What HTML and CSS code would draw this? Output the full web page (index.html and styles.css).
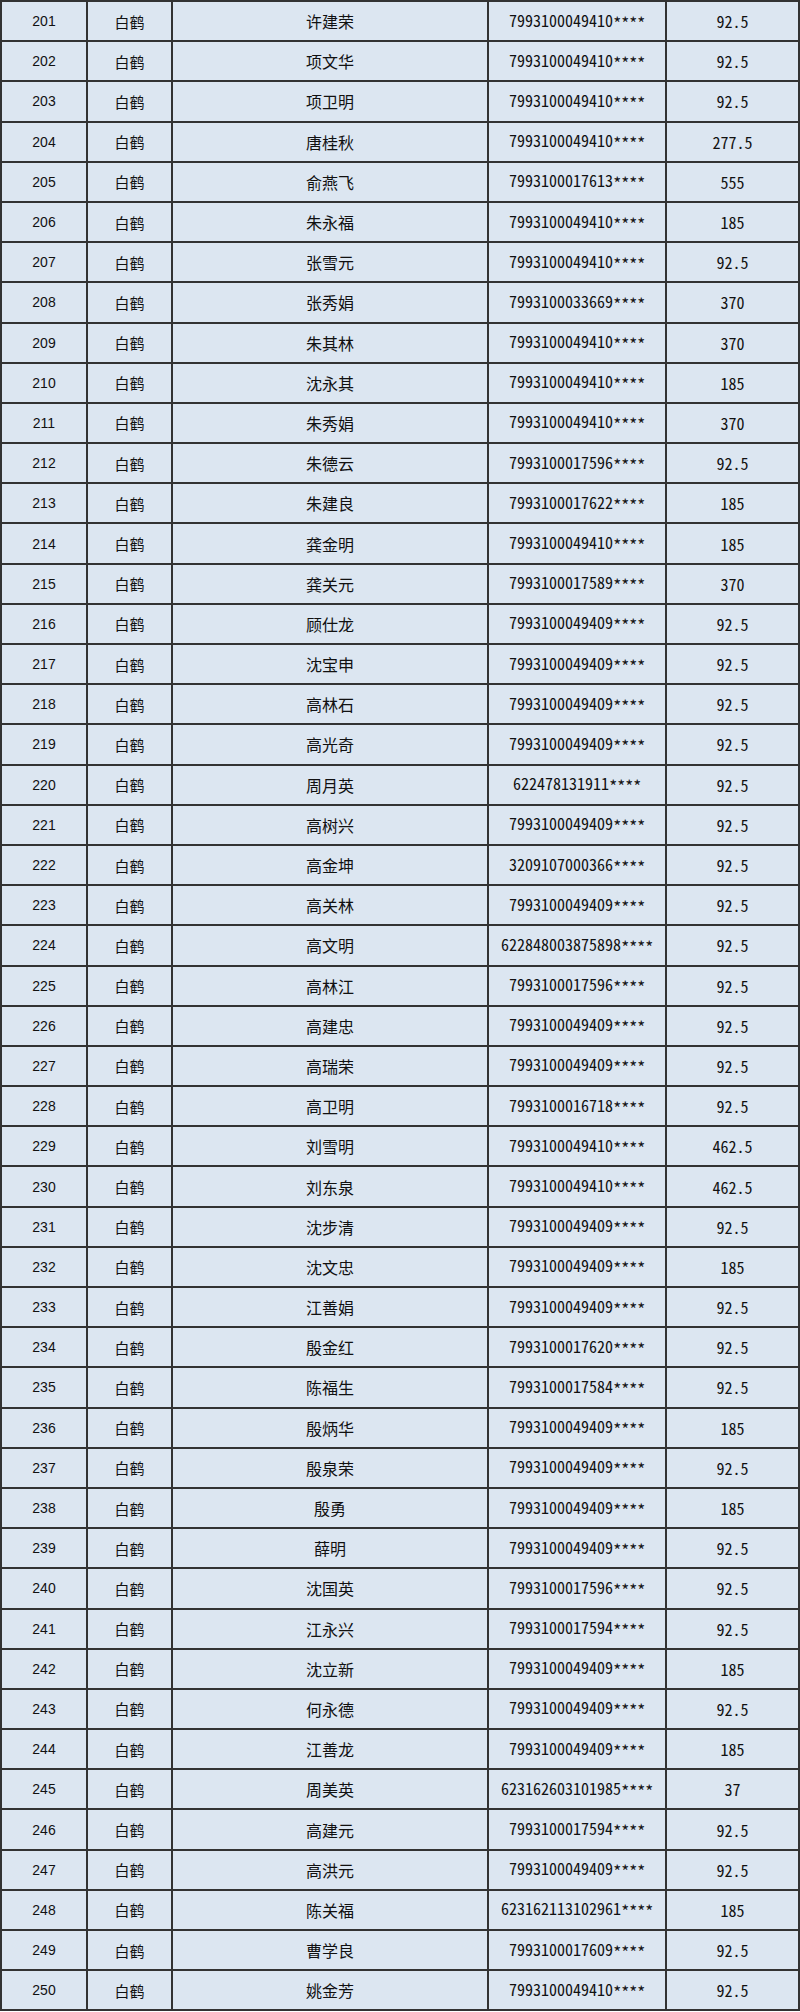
FILE: index.html
```html
<!DOCTYPE html>
<html lang="zh-CN">
<head>
<meta charset="utf-8">
<title>名单</title>
<link rel="stylesheet" href="styles.css">
</head>
<body>
<table class="roster">
<colgroup>
<col class="c-no"><col class="c-town"><col class="c-name"><col class="c-acct"><col class="c-amt">
</colgroup>
<tbody>
<tr><td class="no">201</td><td class="town">白鹤</td><td class="name">许建荣</td><td class="acct">7993100049410<span class="mask">****</span></td><td class="amt">92.5</td></tr>
<tr><td class="no">202</td><td class="town">白鹤</td><td class="name">项文华</td><td class="acct">7993100049410<span class="mask">****</span></td><td class="amt">92.5</td></tr>
<tr><td class="no">203</td><td class="town">白鹤</td><td class="name">项卫明</td><td class="acct">7993100049410<span class="mask">****</span></td><td class="amt">92.5</td></tr>
<tr><td class="no">204</td><td class="town">白鹤</td><td class="name">唐桂秋</td><td class="acct">7993100049410<span class="mask">****</span></td><td class="amt">277.5</td></tr>
<tr><td class="no">205</td><td class="town">白鹤</td><td class="name">俞燕飞</td><td class="acct">7993100017613<span class="mask">****</span></td><td class="amt">555</td></tr>
<tr><td class="no">206</td><td class="town">白鹤</td><td class="name">朱永福</td><td class="acct">7993100049410<span class="mask">****</span></td><td class="amt">185</td></tr>
<tr><td class="no">207</td><td class="town">白鹤</td><td class="name">张雪元</td><td class="acct">7993100049410<span class="mask">****</span></td><td class="amt">92.5</td></tr>
<tr><td class="no">208</td><td class="town">白鹤</td><td class="name">张秀娟</td><td class="acct">7993100033669<span class="mask">****</span></td><td class="amt">370</td></tr>
<tr><td class="no">209</td><td class="town">白鹤</td><td class="name">朱其林</td><td class="acct">7993100049410<span class="mask">****</span></td><td class="amt">370</td></tr>
<tr><td class="no">210</td><td class="town">白鹤</td><td class="name">沈永其</td><td class="acct">7993100049410<span class="mask">****</span></td><td class="amt">185</td></tr>
<tr><td class="no">211</td><td class="town">白鹤</td><td class="name">朱秀娟</td><td class="acct">7993100049410<span class="mask">****</span></td><td class="amt">370</td></tr>
<tr><td class="no">212</td><td class="town">白鹤</td><td class="name">朱德云</td><td class="acct">7993100017596<span class="mask">****</span></td><td class="amt">92.5</td></tr>
<tr><td class="no">213</td><td class="town">白鹤</td><td class="name">朱建良</td><td class="acct">7993100017622<span class="mask">****</span></td><td class="amt">185</td></tr>
<tr><td class="no">214</td><td class="town">白鹤</td><td class="name">龚金明</td><td class="acct">7993100049410<span class="mask">****</span></td><td class="amt">185</td></tr>
<tr><td class="no">215</td><td class="town">白鹤</td><td class="name">龚关元</td><td class="acct">7993100017589<span class="mask">****</span></td><td class="amt">370</td></tr>
<tr><td class="no">216</td><td class="town">白鹤</td><td class="name">顾仕龙</td><td class="acct">7993100049409<span class="mask">****</span></td><td class="amt">92.5</td></tr>
<tr><td class="no">217</td><td class="town">白鹤</td><td class="name">沈宝申</td><td class="acct">7993100049409<span class="mask">****</span></td><td class="amt">92.5</td></tr>
<tr><td class="no">218</td><td class="town">白鹤</td><td class="name">高林石</td><td class="acct">7993100049409<span class="mask">****</span></td><td class="amt">92.5</td></tr>
<tr><td class="no">219</td><td class="town">白鹤</td><td class="name">高光奇</td><td class="acct">7993100049409<span class="mask">****</span></td><td class="amt">92.5</td></tr>
<tr><td class="no">220</td><td class="town">白鹤</td><td class="name">周月英</td><td class="acct">622478131911<span class="mask">****</span></td><td class="amt">92.5</td></tr>
<tr><td class="no">221</td><td class="town">白鹤</td><td class="name">高树兴</td><td class="acct">7993100049409<span class="mask">****</span></td><td class="amt">92.5</td></tr>
<tr><td class="no">222</td><td class="town">白鹤</td><td class="name">高金坤</td><td class="acct">3209107000366<span class="mask">****</span></td><td class="amt">92.5</td></tr>
<tr><td class="no">223</td><td class="town">白鹤</td><td class="name">高关林</td><td class="acct">7993100049409<span class="mask">****</span></td><td class="amt">92.5</td></tr>
<tr><td class="no">224</td><td class="town">白鹤</td><td class="name">高文明</td><td class="acct">622848003875898<span class="mask">****</span></td><td class="amt">92.5</td></tr>
<tr><td class="no">225</td><td class="town">白鹤</td><td class="name">高林江</td><td class="acct">7993100017596<span class="mask">****</span></td><td class="amt">92.5</td></tr>
<tr><td class="no">226</td><td class="town">白鹤</td><td class="name">高建忠</td><td class="acct">7993100049409<span class="mask">****</span></td><td class="amt">92.5</td></tr>
<tr><td class="no">227</td><td class="town">白鹤</td><td class="name">高瑞荣</td><td class="acct">7993100049409<span class="mask">****</span></td><td class="amt">92.5</td></tr>
<tr><td class="no">228</td><td class="town">白鹤</td><td class="name">高卫明</td><td class="acct">7993100016718<span class="mask">****</span></td><td class="amt">92.5</td></tr>
<tr><td class="no">229</td><td class="town">白鹤</td><td class="name">刘雪明</td><td class="acct">7993100049410<span class="mask">****</span></td><td class="amt">462.5</td></tr>
<tr><td class="no">230</td><td class="town">白鹤</td><td class="name">刘东泉</td><td class="acct">7993100049410<span class="mask">****</span></td><td class="amt">462.5</td></tr>
<tr><td class="no">231</td><td class="town">白鹤</td><td class="name">沈步清</td><td class="acct">7993100049409<span class="mask">****</span></td><td class="amt">92.5</td></tr>
<tr><td class="no">232</td><td class="town">白鹤</td><td class="name">沈文忠</td><td class="acct">7993100049409<span class="mask">****</span></td><td class="amt">185</td></tr>
<tr><td class="no">233</td><td class="town">白鹤</td><td class="name">江善娟</td><td class="acct">7993100049409<span class="mask">****</span></td><td class="amt">92.5</td></tr>
<tr><td class="no">234</td><td class="town">白鹤</td><td class="name">殷金红</td><td class="acct">7993100017620<span class="mask">****</span></td><td class="amt">92.5</td></tr>
<tr><td class="no">235</td><td class="town">白鹤</td><td class="name">陈福生</td><td class="acct">7993100017584<span class="mask">****</span></td><td class="amt">92.5</td></tr>
<tr><td class="no">236</td><td class="town">白鹤</td><td class="name">殷炳华</td><td class="acct">7993100049409<span class="mask">****</span></td><td class="amt">185</td></tr>
<tr><td class="no">237</td><td class="town">白鹤</td><td class="name">殷泉荣</td><td class="acct">7993100049409<span class="mask">****</span></td><td class="amt">92.5</td></tr>
<tr><td class="no">238</td><td class="town">白鹤</td><td class="name">殷勇</td><td class="acct">7993100049409<span class="mask">****</span></td><td class="amt">185</td></tr>
<tr><td class="no">239</td><td class="town">白鹤</td><td class="name">薛明</td><td class="acct">7993100049409<span class="mask">****</span></td><td class="amt">92.5</td></tr>
<tr><td class="no">240</td><td class="town">白鹤</td><td class="name">沈国英</td><td class="acct">7993100017596<span class="mask">****</span></td><td class="amt">92.5</td></tr>
<tr><td class="no">241</td><td class="town">白鹤</td><td class="name">江永兴</td><td class="acct">7993100017594<span class="mask">****</span></td><td class="amt">92.5</td></tr>
<tr><td class="no">242</td><td class="town">白鹤</td><td class="name">沈立新</td><td class="acct">7993100049409<span class="mask">****</span></td><td class="amt">185</td></tr>
<tr><td class="no">243</td><td class="town">白鹤</td><td class="name">何永德</td><td class="acct">7993100049409<span class="mask">****</span></td><td class="amt">92.5</td></tr>
<tr><td class="no">244</td><td class="town">白鹤</td><td class="name">江善龙</td><td class="acct">7993100049409<span class="mask">****</span></td><td class="amt">185</td></tr>
<tr><td class="no">245</td><td class="town">白鹤</td><td class="name">周美英</td><td class="acct">623162603101985<span class="mask">****</span></td><td class="amt">37</td></tr>
<tr><td class="no">246</td><td class="town">白鹤</td><td class="name">高建元</td><td class="acct">7993100017594<span class="mask">****</span></td><td class="amt">92.5</td></tr>
<tr><td class="no">247</td><td class="town">白鹤</td><td class="name">高洪元</td><td class="acct">7993100049409<span class="mask">****</span></td><td class="amt">92.5</td></tr>
<tr><td class="no">248</td><td class="town">白鹤</td><td class="name">陈关福</td><td class="acct">623162113102961<span class="mask">****</span></td><td class="amt">185</td></tr>
<tr><td class="no">249</td><td class="town">白鹤</td><td class="name">曹学良</td><td class="acct">7993100017609<span class="mask">****</span></td><td class="amt">92.5</td></tr>
<tr><td class="no">250</td><td class="town">白鹤</td><td class="name">姚金芳</td><td class="acct">7993100049410<span class="mask">****</span></td><td class="amt">92.5</td></tr>
</tbody>
</table>
</body>
</html>
```
FILE: styles.css
```css
html, body {
  margin: 0;
  padding: 0;
  background: #ffffff;
}

.roster {
  border-collapse: collapse;
  table-layout: fixed;
  width: 798px;
  background: #dce6f1;
  color: #111111;
  font-family: "Noto Sans CJK SC", sans-serif;
}

.c-no { width: 86px; }
.c-town { width: 85px; }
.c-name { width: 316px; }
.c-acct { width: 178px; }
.c-amt { width: 133px; }

.roster td {
  border: 2px solid #333333;
  height: 40.2px;
  padding: 0;
  text-align: center;
  vertical-align: middle;
  line-height: 1;
  white-space: nowrap;
  box-sizing: border-box;
}

.roster .no {
  font-family: "Liberation Sans", sans-serif;
  font-size: 14px;
}

.roster .town {
  font-size: 15px;
}

.roster .name {
  font-size: 16px;
}

.roster .acct,
.roster .amt {
  font-size: 16px;
  font-feature-settings: "hwid" 1;
}

.roster .mask {
  display: inline-block;
  font-size: 17px;
  vertical-align: -3px;
  letter-spacing: -0.5px;
}
```
